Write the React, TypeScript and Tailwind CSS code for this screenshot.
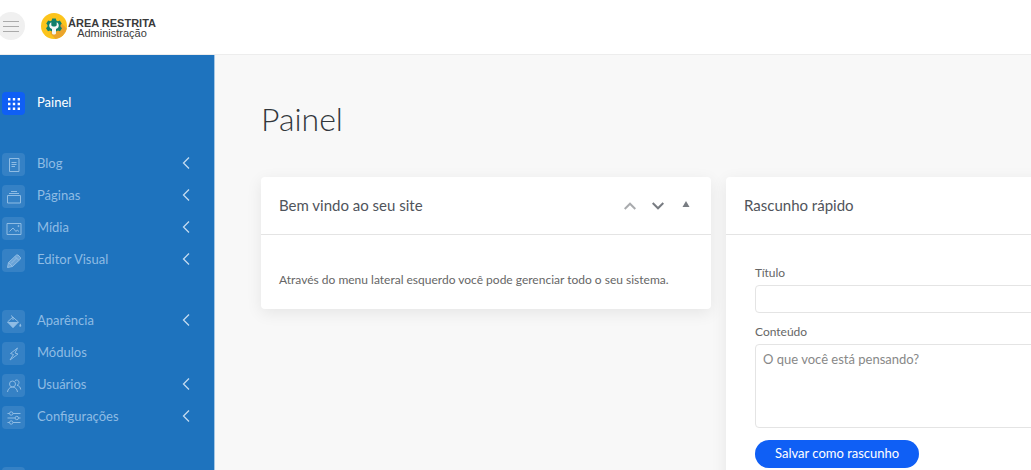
import type { ReactNode } from 'react';

interface MenuEntry {
    label: string;
    icon: ReactNode;
    expandable?: boolean;
    active?: boolean;
    iconOnly?: boolean;
}

function Glyph({ children }: { children: ReactNode }) {
    return (
        <svg viewBox="0 0 16 16" className="h-4 w-4" fill="none" stroke="currentColor" strokeWidth="1" aria-hidden="true">
            {children}
        </svg>
    );
}

const menuGroups: MenuEntry[][] = [
    [
        {
            label: 'Painel',
            active: true,
            icon: (
                <Glyph>
                    <path
                        fill="currentColor"
                        stroke="none"
                        d="M2 2h2.400v2.400H2zM6.800 2h2.400v2.400H6.800zM11.600 2H14v2.400h-2.400zM2 6.800h2.400v2.400H2zM6.800 6.800h2.400v2.400H6.800zM11.600 6.800H14v2.400h-2.400zM2 11.600h2.400V14H2zM6.800 11.600h2.400V14H6.800zM11.600 11.600H14V14h-2.400z"
                    />
                </Glyph>
            ),
        },
    ],
    [
        {
            label: 'Blog',
            expandable: true,
            icon: (
                <Glyph>
                    <path d="M3.500 1.500h9.500v13H3.500zM5.500 5.500h5M5.500 7.500h5M5.500 9.500h3.500" />
                </Glyph>
            ),
        },
        {
            label: 'Páginas',
            expandable: true,
            icon: (
                <Glyph>
                    <path d="M1.500 6.500h13v7.500h-13zM3 4.500h10M5 2.500h6" />
                </Glyph>
            ),
        },
        {
            label: 'Mídia',
            expandable: true,
            icon: (
                <Glyph>
                    <path d="M1 2.500h14v11H1zM3.500 10.500l3.500-3.500 3 3.500 1.200-1.500 1.800 1.500" />
                    <circle cx="12.500" cy="5" r="0.600" fill="currentColor" />
                </Glyph>
            ),
        },
        {
            label: 'Editor Visual',
            expandable: true,
            icon: (
                <Glyph>
                    <path fill="currentColor" fillOpacity="0.6" d="M1.500 14.500l1-5L10.500 2H12l2.500 2.500V6L6.500 13.500z" />
                    <path d="M9 3.500L12.500 7M2.500 9.500l4 4M5 10.500l5.500-5.500" />
                </Glyph>
            ),
        },
    ],
    [
        {
            label: 'Aparência',
            expandable: true,
            icon: (
                <Glyph>
                    <path d="M5 1.500l7.500 6.500-5.500 5.500L1.500 8 7 3v3" />
                    <path fill="currentColor" stroke="none" d="M1.500 8h11L7 14zM14.300 9.500c1.200 2 1.500 3 0 3.300-1.500-.3-1.200-1.300 0-3.300z" />
                </Glyph>
            ),
        },
        {
            label: 'Módulos',
            icon: (
                <Glyph>
                    <path strokeLinejoin="round" d="M11.500 2L4.500 7.500l3 1L4 14l8-6-3-1z" />
                </Glyph>
            ),
        },
        {
            label: 'Usuários',
            expandable: true,
            icon: (
                <Glyph>
                    <circle cx="6.500" cy="6" r="3" />
                    <path d="M1.500 14c.3-3 2.500-5 5-5s4.700 2 5 5M9 2.500c2-1.200 4 0 4 2 0 1.300-.8 2.300-2 2.800 2.200.6 3.500 2 3.700 4.200" />
                </Glyph>
            ),
        },
        {
            label: 'Configurações',
            expandable: true,
            icon: (
                <Glyph>
                    <path d="M1.500 3.500h2M7 3.500h7.500M1.500 8h7.500M12.500 8h2M1.500 12.500h2M7 12.500h7.500" />
                    <circle cx="5.200" cy="3.500" r="1.700" />
                    <circle cx="10.800" cy="8" r="1.700" />
                    <circle cx="5.200" cy="12.500" r="1.700" />
                </Glyph>
            ),
        },
    ],
    [
        {
            label: 'Sair',
            iconOnly: true,
            icon: (
                <Glyph>
                    <path d="M8 3H3v10h5M6 8h8M11 5l3 3-3 3" />
                </Glyph>
            ),
        },
    ],
];

function Logo() {
    return (
        <a href="#" className="flex items-center gap-px font-['Liberation_Sans',sans-serif] text-[11px] leading-[10px] text-[#3a3a3a]">
            <svg viewBox="0 0 26 26" className="h-[26px] w-[26px]" aria-hidden="true">
                <circle cx="13" cy="13" r="13" fill="#fcc41c" />
                <path d="M19 9l6.700 6.500A13 13 0 0 1 14.500 26L9 20z" fill="#eba42c" />
                <path
                    d="M11.200 5.500h3.600l.5 2 1.500.8 2-.9 2 3-1.300 1.500v1.700l1.500 1.600-2 3-2-.6-2 1H11l-2-1-2 .6-2-3 1.500-1.600v-1.700L5.200 10.400l2-3 2 .9 1.500-.8z"
                    fill="#11806a"
                />
                <path d="M10.300 9.300v3.200l1.500 1h2.400l1.500-1V9.300c1.700 1 2.300 2.500 2 4-.3 1.300-1.300 2.200-2.700 2.700v4.300c0 1.600-4 1.600-4 0V16c-1.400-.5-2.400-1.400-2.700-2.700-.3-1.500.3-3 2-4z" fill="#f4f7f6" />
            </svg>
            <span className="flex flex-col items-center pt-1">
                <strong className="font-bold">ÁREA RESTRITA</strong>
                <span>Administração</span>
            </span>
        </a>
    );
}

function Sidebar() {
    return (
        <nav className="flex w-[215px] shrink-0 flex-col gap-[38px] overflow-hidden border-r border-[#a5c7e5] bg-[#1e73be] pt-[37px]">
            {menuGroups.map((group) => (
                <ul key={group[0].label} className="flex flex-col gap-[9px]">
                    {group.map((item) => (
                        <li key={item.label}>
                            <a
                                href="#"
                                aria-label={item.label}
                                className={`flex h-[23px] items-start pl-0.5 pr-6 text-[13px] ${item.active ? 'text-white' : 'text-[#8fbce4]'}`}
                            >
                                <span
                                    className={`flex h-[23px] w-[23px] items-center justify-center rounded ${item.active ? 'bg-[#0f5ff5]' : 'bg-white/10'}`}
                                >
                                    {item.icon}
                                </span>
                                {!item.iconOnly && <span className="ml-3 leading-5">{item.label}</span>}
                                {item.expandable && (
                                    <span className="ml-auto flex h-5 items-center text-[#c3dbf0]">
                                        <svg viewBox="0 0 8 12" className="h-3 w-2" fill="none" stroke="currentColor" strokeWidth="1.3" aria-hidden="true">
                                            <path d="M7 .5L1.500 6 7 11.500" />
                                        </svg>
                                    </span>
                                )}
                            </a>
                        </li>
                    ))}
                </ul>
            ))}
        </nav>
    );
}

function Card({ title, actions, children }: { title: string; actions?: ReactNode; children: ReactNode }) {
    return (
        <section className="rounded bg-white shadow-[0_4px_16px_rgba(0,0,0,0.08)]">
            <header className="flex h-[58px] items-center justify-between border-b border-[#e4e4e4] pl-[18px] pr-[19px]">
                <h2 className="text-[15px] text-[#50545b]">{title}</h2>
                {actions}
            </header>
            {children}
        </section>
    );
}

function PanelActions() {
    return (
        <div className="flex items-center gap-4">
            <button type="button" aria-label="Mover para cima" className="text-[#a9abae]">
                <svg viewBox="0 0 12 8" className="h-2 w-3" fill="none" stroke="currentColor" strokeWidth="2">
                    <path d="M.7 7L6 1.700 11.300 7" />
                </svg>
            </button>
            <button type="button" aria-label="Mover para baixo" className="text-[#787c82]">
                <svg viewBox="0 0 12 8" className="h-2 w-3" fill="none" stroke="currentColor" strokeWidth="2">
                    <path d="M.7 1L6 6.300 11.300 1" />
                </svg>
            </button>
            <button type="button" aria-label="Alternar painel" className="flex w-3 justify-center pb-1 text-[#787c82]">
                <svg viewBox="0 0 8 6" className="h-[6px] w-2" fill="currentColor">
                    <path d="M4 0l3.500 6h-7z" />
                </svg>
            </button>
        </div>
    );
}

export default function App() {
    return (
        <div className="flex h-screen flex-col overflow-hidden bg-[#f8f8f8] font-[Lato,sans-serif]">
            {/* Header */}
            <header className="flex h-[55px] shrink-0 items-center gap-4 border-b border-[#ededed] bg-white pb-0.5">
                <button
                    type="button"
                    aria-label="Abrir menu"
                    className="-ml-[3px] flex h-7 w-7 items-center justify-center rounded-full bg-[#f0f0f0] text-[#aaaaaa]"
                >
                    <svg viewBox="0 0 16 12" className="h-3 w-4" stroke="currentColor" strokeWidth="1">
                        <path d="M0 1.500h16M0 6.500h16M0 11.500h16" />
                    </svg>
                </button>
                <Logo />
            </header>

            <div className="flex min-h-0 flex-1">
                <Sidebar />

                {/* Main Content */}
                <main className="min-w-0 flex-1 overflow-hidden pl-[46px] pt-11">
                    <h1 className="text-[32px] font-light leading-10 text-[#32373c]">Painel</h1>

                    <div className="mt-[38px] grid grid-cols-[450px_minmax(450px,1fr)] items-start gap-[15px]">
                        <Card title="Bem vindo ao seu site" actions={<PanelActions />}>
                            <p className="px-[18px] pb-[19px] pt-[35px] text-[12px] leading-5 text-[#666666]">
                                Através do menu lateral esquerdo você pode gerenciar todo o seu sistema.
                            </p>
                        </Card>

                        <Card title="Rascunho rápido">
                            <form className="px-[29px] pb-6 pt-7 text-[#666666]">
                                <label htmlFor="draft-title" className="block text-[12px] leading-5">
                                    Título
                                </label>
                                <input
                                    id="draft-title"
                                    type="text"
                                    className="mt-0.5 block h-7 w-full rounded border border-[#e4e4e4] bg-white px-2 text-[13px] outline-none"
                                />
                                <label htmlFor="draft-content" className="mt-[9px] block text-[12px] leading-5">
                                    Conteúdo
                                </label>
                                <textarea
                                    id="draft-content"
                                    placeholder="O que você está pensando?"
                                    className="mt-0.5 block h-[84px] w-full resize-none rounded border border-[#e4e4e4] bg-white px-[7px] py-1 text-[13px] leading-5 outline-none placeholder:text-[#888888]"
                                />
                                <button type="button" className="mt-3 h-7 rounded-full bg-[#0f5ff5] px-5 text-[13px] text-white">
                                    Salvar como rascunho
                                </button>
                            </form>
                        </Card>
                    </div>
                </main>
            </div>
        </div>
    );
}
